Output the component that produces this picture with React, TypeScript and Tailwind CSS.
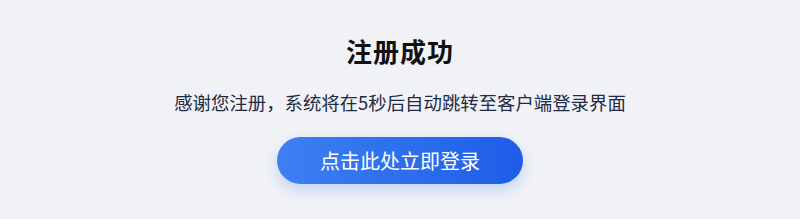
import React from "react";

export default function App() {
  return (
    <div
      className="w-[800px] h-[219px] bg-[#f0f2f6] flex flex-col items-center pt-[33px]"
      style={{ fontFamily: '"Noto Sans CJK SC", "Noto Sans", sans-serif' }}
    >
      <h1 className="text-[26px] leading-[36px] font-bold text-[#111111] tracking-[1px]">注册成功</h1>
      <p className="mt-[19px] text-[18.4px] leading-[28px] text-[#1f2a44]">
        感谢您注册，系统将在5秒后自动跳转至客户端登录界面
      </p>
      <button className="mt-[21px] w-[246px] h-[47px] rounded-full bg-gradient-to-r from-[#3d80f1] to-[#1d5de8] text-white text-[20px] shadow-[0_6px_14px_rgba(37,99,235,0.22)]">
        点击此处立即登录
      </button>
    </div>
  );
}
